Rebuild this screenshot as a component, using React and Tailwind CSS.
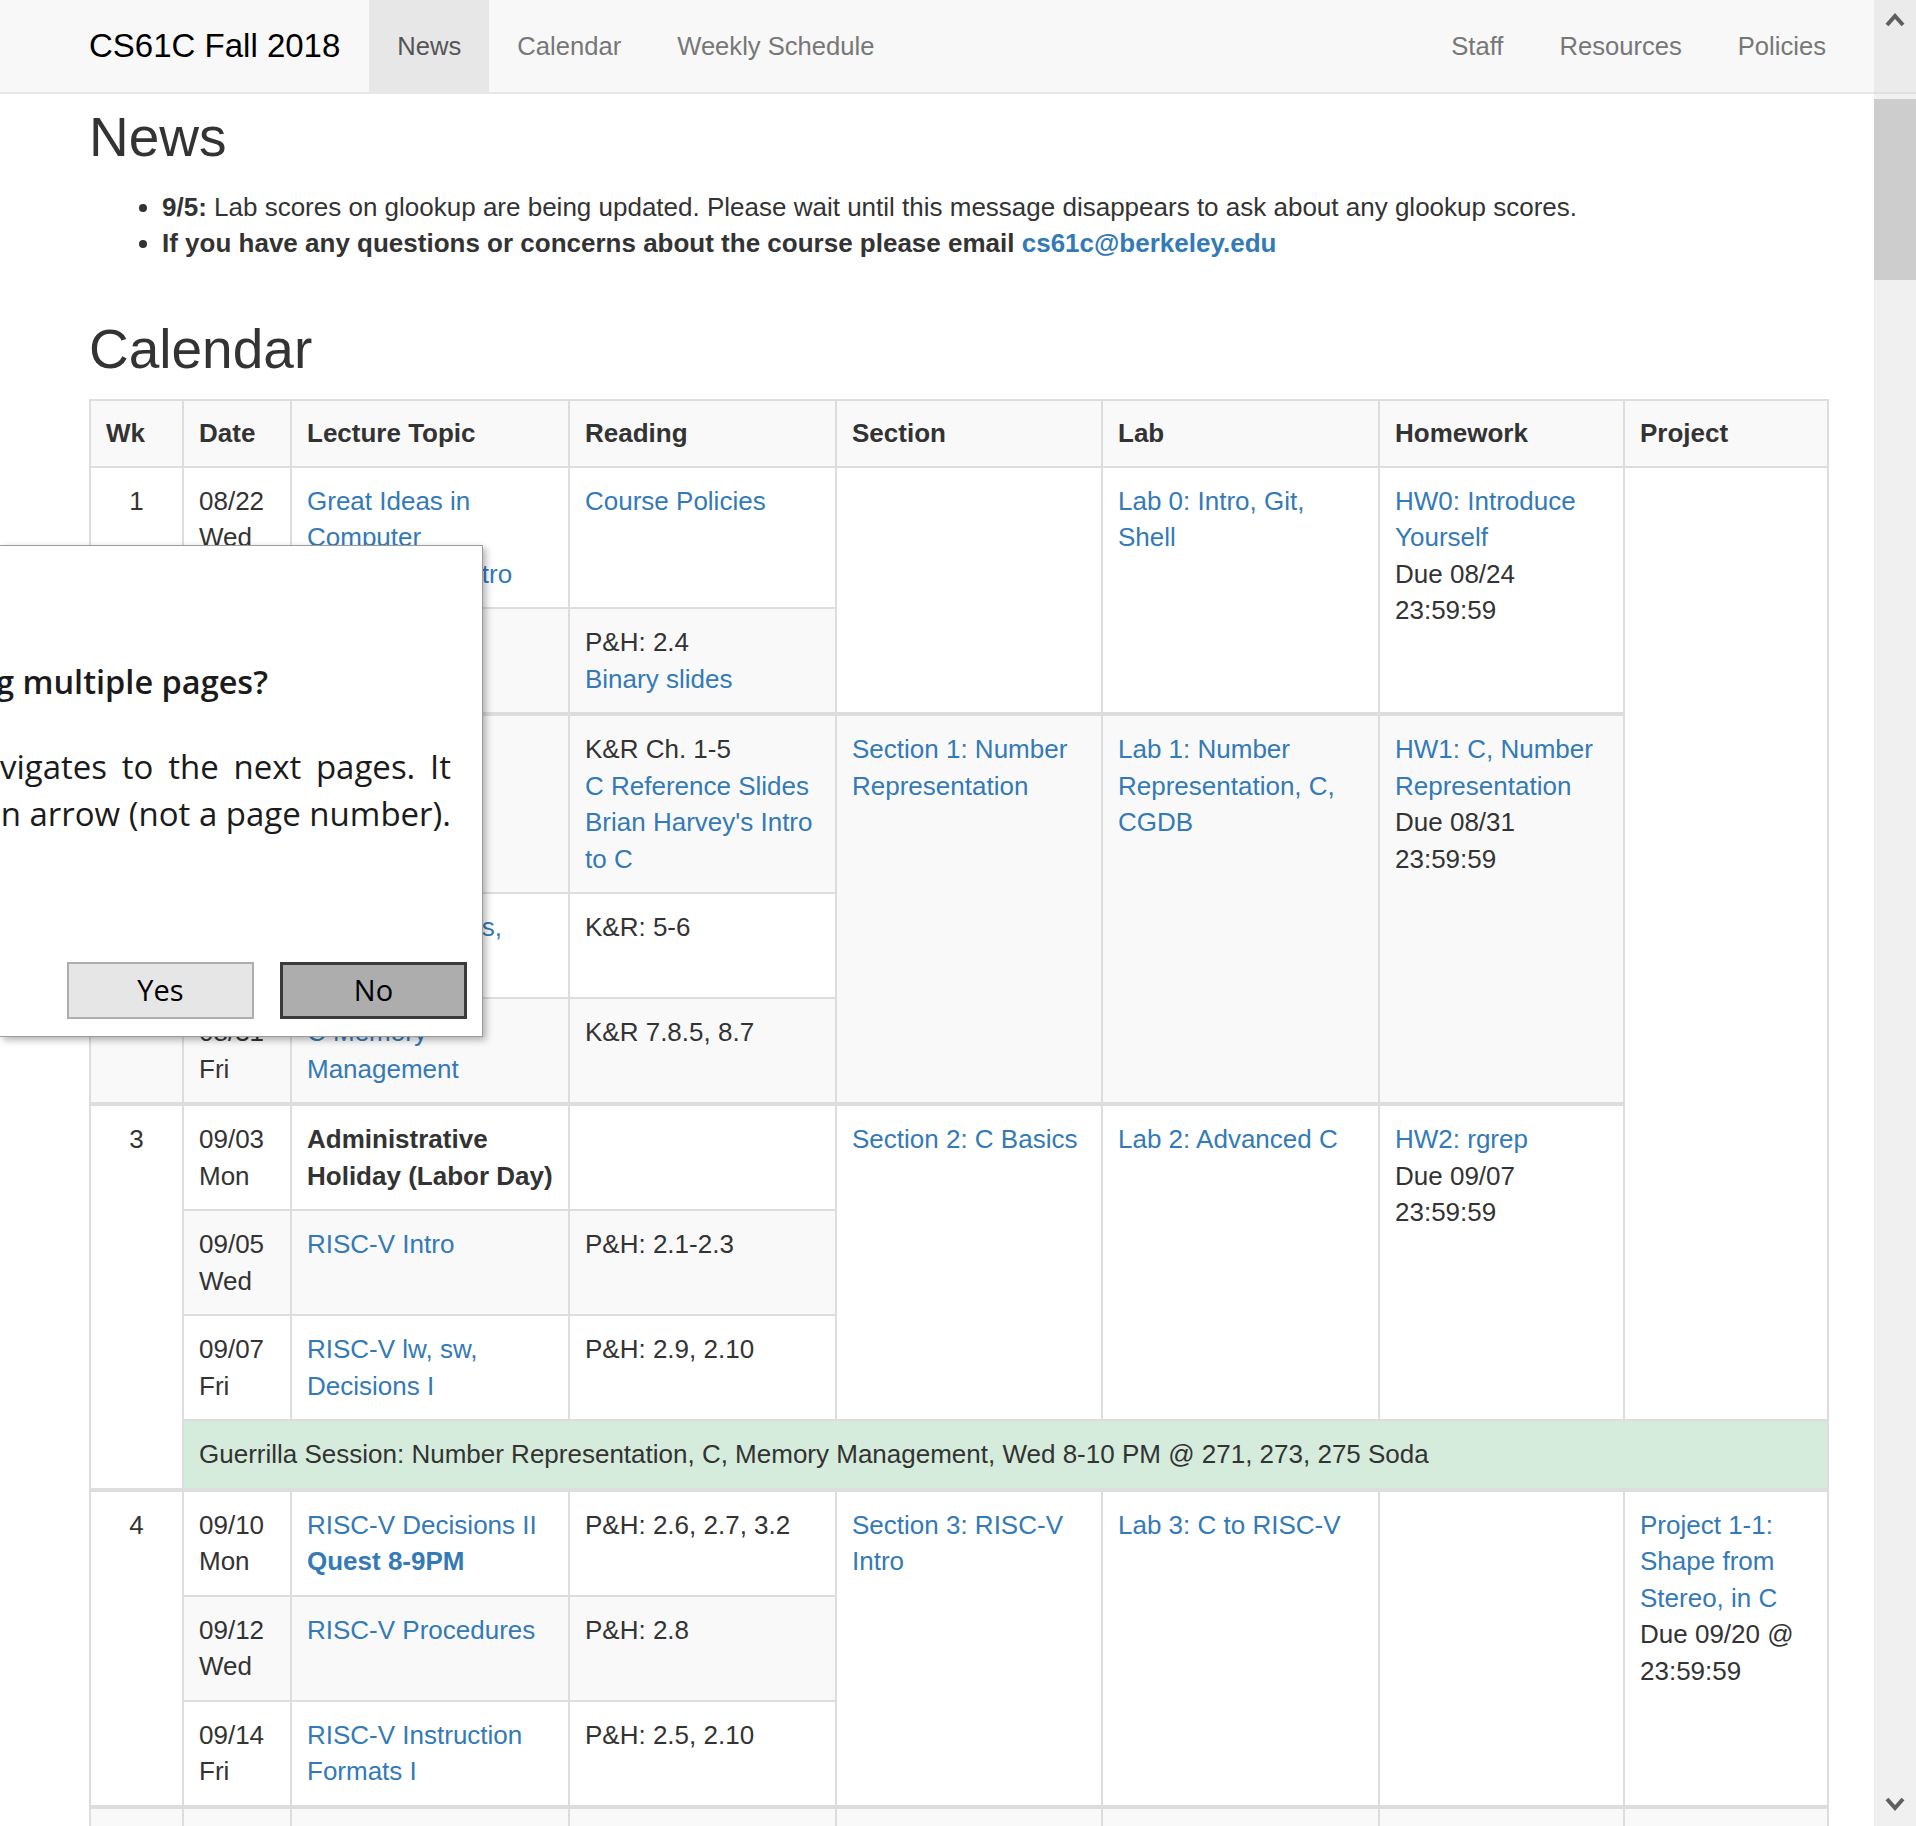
import React from 'react'

const cell = 'border-2 border-[#dddddd] px-[15px] py-[15px] align-top'
const gray = 'bg-[#f9f9f9]'
const white = 'bg-white'
const thick = 'border-t-4'

function A({ children, bold }) {
  return (
    <a href="#" className={bold ? 'font-bold text-[#337ab7] no-underline' : 'text-[#337ab7] no-underline'}>
      {children}
    </a>
  )
}

function Chevron({ down }) {
  return (
    <svg width="20" height="15" viewBox="0 0 20 15">
      <polyline
        points={down ? '2,3 10,12 18,3' : '2,12 10,3 18,12'}
        fill="none"
        stroke="#5f5f5f"
        strokeWidth="4"
      />
    </svg>
  )
}

function Navbar() {
  const left = ['Calendar', 'Weekly Schedule']
  const right = ['Staff', 'Resources', 'Policies']
  return (
    <nav className="h-[94px] border-b-2 border-[#e7e7e7] bg-[#f8f8f8] text-[25.6px]">
      <div className="mx-auto flex h-full w-[1738px] items-stretch justify-between">
        <div className="flex items-stretch">
          <a href="#" className="flex items-center pr-[29px] text-[33px] text-black no-underline">
            CS61C Fall 2018
          </a>
          <a href="#" className="flex items-center bg-[#e7e7e7] px-[28px] text-[#555] no-underline">
            News
          </a>
          {left.map((l) => (
            <a key={l} href="#" className="flex items-center px-[28px] text-[#777] no-underline">
              {l}
            </a>
          ))}
        </div>
        <div className="-mr-[27px] flex items-stretch">
          {right.map((l) => (
            <a key={l} href="#" className="flex items-center px-[28px] text-[#777] no-underline">
              {l}
            </a>
          ))}
        </div>
      </div>
    </nav>
  )
}

function Calendar() {
  const heads = ['Wk', 'Date', 'Lecture Topic', 'Reading', 'Section', 'Lab', 'Homework', 'Project']
  return (
    <table className="w-[1738px] table-fixed border-collapse border-2 border-[#dddddd] text-left">
      <colgroup>
        <col className="w-[93px]" />
        <col className="w-[108px]" />
        <col className="w-[278px]" />
        <col className="w-[267px]" />
        <col className="w-[266px]" />
        <col className="w-[277px]" />
        <col className="w-[245px]" />
        <col className="w-[204px]" />
      </colgroup>
      <thead>
        <tr className={gray}>
          {heads.map((h) => (
            <th key={h} className="border-2 border-[#dddddd] px-[15px] py-[14px] text-left align-top font-bold">
              {h}
            </th>
          ))}
        </tr>
      </thead>
      <tbody>
        {/* week 1 */}
        <tr className={white}>
          <td rowSpan={2} className={cell + ' text-center'}>1</td>
          <td className={cell}>08/22<br />Wed</td>
          <td className={cell}><A>Great Ideas in Computer Architecture, Intro</A></td>
          <td className={cell}><A>Course Policies</A></td>
          <td rowSpan={2} className={cell}></td>
          <td rowSpan={2} className={cell}><A>Lab 0: Intro, Git,<br />Shell</A></td>
          <td rowSpan={2} className={cell}>
            <A>HW0: Introduce Yourself</A>
            <br />
            Due 08/24 23:59:59
          </td>
          <td rowSpan={8} className={cell + ' bg-white'}></td>
        </tr>
        <tr className={gray}>
          <td className={cell}>08/24<br />Fri</td>
          <td className={cell}><A>Number Representation</A></td>
          <td className={cell}>
            P&amp;H: 2.4
            <br />
            <A>Binary slides</A>
          </td>
        </tr>

        {/* week 2 */}
        <tr className={gray}>
          <td rowSpan={3} className={cell + ' ' + thick + ' text-center'}>2</td>
          <td className={cell + ' ' + thick}>08/27<br />Mon</td>
          <td className={cell + ' ' + thick}><A>Intro to C</A></td>
          <td className={cell + ' ' + thick}>
            K&amp;R Ch. 1-5
            <br />
            <A>C Reference Slides</A>
            <br />
            <A>Brian Harvey's Intro to C</A>
          </td>
          <td rowSpan={3} className={cell + ' ' + thick}><A>Section 1: Number Representation</A></td>
          <td rowSpan={3} className={cell + ' ' + thick}><A>Lab 1: Number Representation, C, CGDB</A></td>
          <td rowSpan={3} className={cell + ' ' + thick}>
            <A>HW1: C, Number Representation</A>
            <br />
            Due 08/31 23:59:59
          </td>
        </tr>
        <tr className={white}>
          <td className={cell}>08/29<br />Wed</td>
          <td className={cell}><A>C Intro, Pointers, Arrays, Strings</A></td>
          <td className={cell}>K&amp;R: 5-6</td>
        </tr>
        <tr className={gray}>
          <td className={cell}>08/31<br />Fri</td>
          <td className={cell}><A>C Memory Management</A></td>
          <td className={cell}>K&amp;R 7.8.5, 8.7</td>
        </tr>

        {/* week 3 */}
        <tr className={white}>
          <td rowSpan={4} className={cell + ' ' + thick + ' text-center'}>3</td>
          <td className={cell + ' ' + thick}>09/03<br />Mon</td>
          <td className={cell + ' ' + thick + ' font-bold'}>Administrative<br />Holiday (Labor Day)</td>
          <td className={cell + ' ' + thick}></td>
          <td rowSpan={3} className={cell + ' ' + thick}><A>Section 2: C Basics</A></td>
          <td rowSpan={3} className={cell + ' ' + thick}><A>Lab 2: Advanced C</A></td>
          <td rowSpan={3} className={cell + ' ' + thick}>
            <A>HW2: rgrep</A>
            <br />
            Due 09/07 23:59:59
          </td>
        </tr>
        <tr className={gray}>
          <td className={cell}>09/05<br />Wed</td>
          <td className={cell}><A>RISC-V Intro</A></td>
          <td className={cell}>P&amp;H: 2.1-2.3</td>
        </tr>
        <tr className={white}>
          <td className={cell}>09/07<br />Fri</td>
          <td className={cell}><A>RISC-V lw, sw, Decisions I</A></td>
          <td className={cell}>P&amp;H: 2.9, 2.10</td>
        </tr>
        <tr>
          <td colSpan={7} className={cell + ' bg-[#d5ebdb]'}>
            Guerrilla Session: Number Representation, C, Memory Management, Wed 8-10 PM @ 271, 273, 275 Soda
          </td>
        </tr>

        {/* week 4 */}
        <tr className={white}>
          <td rowSpan={3} className={cell + ' ' + thick + ' text-center'}>4</td>
          <td className={cell + ' ' + thick}>09/10<br />Mon</td>
          <td className={cell + ' ' + thick}>
            <A>RISC-V Decisions II</A>
            <br />
            <A bold>Quest 8-9PM</A>
          </td>
          <td className={cell + ' ' + thick}>P&amp;H: 2.6, 2.7, 3.2</td>
          <td rowSpan={3} className={cell + ' ' + thick}><A>Section 3: RISC-V Intro</A></td>
          <td rowSpan={3} className={cell + ' ' + thick}><A>Lab 3: C to RISC-V</A></td>
          <td rowSpan={3} className={cell + ' ' + thick}></td>
          <td rowSpan={3} className={cell + ' ' + thick}>
            <A>Project 1-1: Shape from Stereo, in C</A>
            <br />
            Due 09/20 @ 23:59:59
          </td>
        </tr>
        <tr className={gray}>
          <td className={cell}>09/12<br />Wed</td>
          <td className={cell}><A>RISC-V Procedures</A></td>
          <td className={cell}>P&amp;H: 2.8</td>
        </tr>
        <tr className={white}>
          <td className={cell}>09/14<br />Fri</td>
          <td className={cell}><A>RISC-V Instruction Formats I</A></td>
          <td className={cell}>P&amp;H: 2.5, 2.10</td>
        </tr>

        {/* week 5, only its top edge is in the window */}
        <tr className={gray}>
          <td className={cell + ' ' + thick}></td>
          <td className={cell + ' ' + thick}></td>
          <td className={cell + ' ' + thick}></td>
          <td className={cell + ' ' + thick}></td>
          <td className={cell + ' ' + thick}></td>
          <td className={cell + ' ' + thick}></td>
          <td className={cell + ' ' + thick}></td>
          <td className={cell + ' ' + thick}></td>
        </tr>
      </tbody>
    </table>
  )
}

function Dialog() {
  return (
    <div className="absolute left-0 top-[545px] h-[492px] w-[483px] border border-l-0 border-[#9c9c9c] bg-white font-['Open_Sans',sans-serif] text-[#1b1b1b] shadow-[3px_3px_7px_rgba(0,0,0,0.3)]">
      <div className="-ml-[4px] mt-[116px] whitespace-nowrap text-[32.5px] font-semibold leading-[40px]">
        g multiple pages?
      </div>
      <div className="mt-[41px] w-[451px] text-[33px] leading-[47px]">
        <div className="whitespace-nowrap text-justify [text-align-last:justify]">vigates to the next pages. It</div>
        <div className="whitespace-nowrap text-right">n arrow (not a page number).</div>
      </div>
      <div className="mt-[125px] flex gap-[26px] pl-[67px]">
        <button className="h-[57px] w-[187px] border-2 border-[#adadad] bg-[#e6e6e6] text-[29px] text-black">
          Yes
        </button>
        <button className="h-[57px] w-[187px] border-[3px] border-[#3a3a3a] bg-[#adadad] text-[29px] text-black">
          No
        </button>
      </div>
    </div>
  )
}

function Scrollbar() {
  return (
    <div className="absolute right-0 top-0 flex h-full w-[42px] flex-col bg-[#f0f0f0]">
      <div className="flex h-[92px] justify-center bg-[#ebebeb] pt-[13px]">
        <Chevron />
      </div>
      <div className="h-[2px] bg-[#e0e0e0]" />
      <div className="h-[5px]" />
      <div className="h-[181px] bg-[#cdcdcd]" />
      <div className="flex-1" />
      <div className="flex h-[40px] justify-center pt-[10px]">
        <Chevron down />
      </div>
    </div>
  )
}

export default function App() {
  return (
    <div className="relative h-[1826px] w-full overflow-hidden bg-white font-['Liberation_Sans',Arial,sans-serif] text-[26px] leading-[36.5px] text-[#333]">
      <Navbar />
      <div className="mx-auto w-[1738px]">
        <h2 className="mt-[13px] text-[55px] font-normal leading-[60.5px]">News</h2>
        <ul className="mt-[21px] list-disc pl-[73px]">
          <li>
            <b>9/5:</b> Lab scores on glookup are being updated. Please wait until this message disappears to ask
            about any glookup scores.
          </li>
          <li className="font-bold">
            If you have any questions or concerns about the course please email{' '}
            <A>cs61c@berkeley.edu</A>
          </li>
        </ul>
        <h2 className="mt-[57px] text-[55px] font-normal leading-[60.5px]">Calendar</h2>
        <div className="mt-[20px]">
          <Calendar />
        </div>
      </div>
      <Dialog />
      <Scrollbar />
    </div>
  )
}
